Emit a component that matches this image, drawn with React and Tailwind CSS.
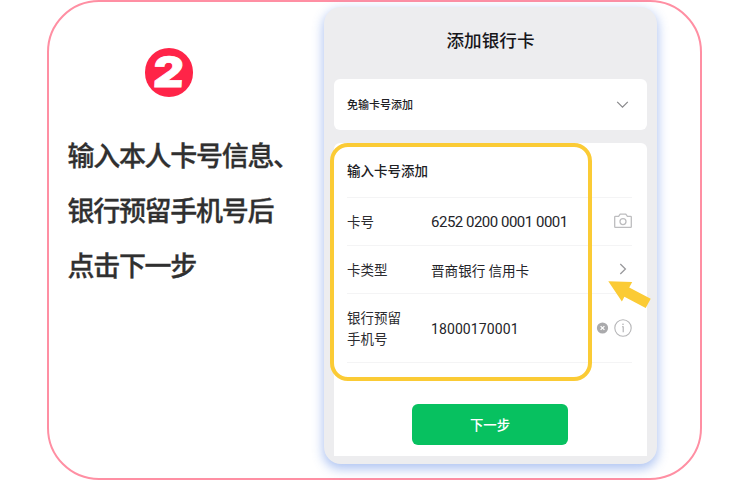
const CJK = "font-['Noto_Sans_CJK_SC',sans-serif]";
const NUM = "font-['Roboto','Noto_Sans_CJK_SC',sans-serif]";

function StepBadge() {
  return (
    <div className="ml-[96px] flex h-[49px] w-[48px] items-center justify-center rounded-full bg-[#ff2448]">
      <span className="block -translate-y-px -skew-x-3 scale-x-[1.12] font-['Inter',sans-serif] text-[42px] leading-[49px] font-black text-white [-webkit-text-stroke:0.8px_#fff]">
        2
      </span>
    </div>
  );
}

function Camera() {
  return (
    <svg className="-translate-y-px" width="18" height="16" viewBox="0 0 18 16" fill="none" stroke="#bdbdbf" strokeWidth="1.3" strokeLinejoin="round">
      <path d="M1.4 3.3H4.6L6.2 1.2H11.8L13.4 3.3H16.6Q17.3 3.3 17.3 4V13.7Q17.3 14.4 16.6 14.4H1.4Q.7 14.4 .7 13.7V4Q.7 3.3 1.4 3.3Z" />
      <circle cx="9" cy="8.6" r="3" />
    </svg>
  );
}

function Chevron() {
  return (
    <svg className="-translate-y-px" width="18" height="14" viewBox="0 0 18 14" fill="none" stroke="#99999c" strokeWidth="1.3">
      <path d="M6.3 2 11.4 7 6.3 12" />
    </svg>
  );
}

function ClearInfo() {
  return (
    <svg width="36" height="18" viewBox="0 0 36 18" fill="none">
      <circle cx="6.5" cy="9" r="5.6" fill="#aaaaac" />
      <path d="M4.6 7.1 8.4 10.9M8.4 7.1 4.6 10.9" stroke="#fff" strokeWidth="1.3" />
      <circle cx="27" cy="9" r="8.2" stroke="#b5b5b7" strokeWidth="1.1" />
      <path d="M26 7.7H27.2V13.2" stroke="#b0b0b2" strokeWidth="1.1" />
      <circle cx="27" cy="5.2" r=".8" fill="#b0b0b2" />
    </svg>
  );
}

function Row({ label, value, icon, className }) {
  return (
    <div className={`flex items-center border-b border-[#f4f4f5] ${className}`}>
      <div className={`w-[84px] shrink-0 text-[13.5px] leading-[21px] whitespace-pre-line text-[#2c2c30] ${CJK}`}>{label}</div>
      <div className="flex-1 whitespace-nowrap text-[#242429]">{value}</div>
      {icon}
    </div>
  );
}

export default function App() {
  return (
    <div className="h-[480px] w-[750px] overflow-hidden bg-white pl-[47px]">
      <div className="relative flex h-[480px] w-[655px] rounded-[52px] border-2 border-[#ff8fa3]">
        <section className="w-[275px] shrink-0 pt-[46px]">
          <StepBadge />
          <div className={`mt-[30px] ml-[18.5px] text-[27px] leading-[55px] font-medium tracking-[-1.3px] whitespace-nowrap text-[#303030] [-webkit-text-stroke:0.3px_#303030] ${CJK}`}>
            <p>输入本人卡号信息、</p>
            <p>银行预留手机号后</p>
            <p>点击下一步</p>
          </div>
        </section>

        <section className="mt-[5px] flex h-[457px] w-[333px] shrink-0 flex-col rounded-[17px] bg-[#ededef] px-[10px] shadow-[0_4px_11px_1px_rgba(65,115,225,0.42)]">
          <h1 className={`h-[72px] text-center text-[17.6px] leading-[65px] font-medium text-[#16161a] ${CJK}`}>添加银行卡</h1>

          <div className="flex h-[51px] items-center justify-between rounded-[6px] bg-white pr-[18px] pl-[13px]">
            <span className={`text-[11px] font-medium text-[#202024] ${CJK}`}>免输卡号添加</span>
            <svg width="13" height="9" viewBox="0 0 13 9" fill="none" stroke="#88888b" strokeWidth="1.2">
              <path d="M1.2 1.8 6.5 7.1 11.8 1.8" />
            </svg>
          </div>

          <div className="mt-[13px] h-[313px] rounded-t-[6px] bg-white pr-[15px] pl-[13px]">
            <h2 className={`h-[55px] border-b border-[#f4f4f5] text-[13.5px] leading-[54px] font-medium text-[#202024] ${CJK}`}>
              输入卡号添加
            </h2>
            <Row className="h-[48px]" label="卡号" icon={<Camera />}
              value={<span className={`text-[15px] tracking-[-0.49px] ${NUM}`}>6252 0200 0001 0001</span>} />
            <Row className="h-[48px]" label="卡类型" icon={<Chevron />}
              value={<span className={`text-[13.6px] ${CJK}`}>晋商银行 信用卡</span>} />
            <Row className="h-[69px]" label={"银行预留\n手机号"} icon={<ClearInfo />}
              value={<span className={`text-[14px] tracking-[0.1px] ${NUM}`}>18000170001</span>} />
            <button className={`mt-[41px] ml-[65px] block h-[41px] w-[156px] rounded-[6px] bg-[#07c160] text-[13.4px] font-medium text-white ${CJK}`}>
              下一步
            </button>
          </div>
        </section>

        {/* highlight outline and pointer drawn over the form */}
        <div className="absolute top-[141px] left-[281px] h-[238px] w-[262px] rounded-[18px] border-4 border-[#fbcb35]" />
        <svg className="absolute top-[277px] left-[558px]" width="45" height="32" viewBox="0 0 45 32" fill="#fbcb35">
          <path d="M1.3 2.2 25.2 3 22.2 8.6 43.7 19.8 38.7 29 17.4 17.8 14.9 22.6Z" />
        </svg>
      </div>
    </div>
  );
}
